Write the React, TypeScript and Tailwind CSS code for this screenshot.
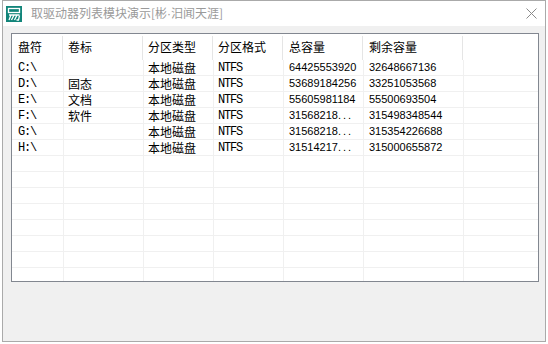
import React from 'react';

type Drive = {
  letter: string;
  label: string;
  kind: string;
  fs: string;
  total: string;
  free: string;
};

const drives: Drive[] = [
  { letter: 'C:\\', label: '', kind: '本地磁盘', fs: 'NTFS', total: '64425553920', free: '32648667136' },
  { letter: 'D:\\', label: '固态', kind: '本地磁盘', fs: 'NTFS', total: '53689184256', free: '33251053568' },
  { letter: 'E:\\', label: '文档', kind: '本地磁盘', fs: 'NTFS', total: '55605981184', free: '55500693504' },
  { letter: 'F:\\', label: '软件', kind: '本地磁盘', fs: 'NTFS', total: '31568218...', free: '315498348544' },
  { letter: 'G:\\', label: '', kind: '本地磁盘', fs: 'NTFS', total: '31568218...', free: '315354226688' },
  { letter: 'H:\\', label: '', kind: '本地磁盘', fs: 'NTFS', total: '31514217...', free: '315000655872' },
];

const headers = ['盘符', '卷标', '分区类型', '分区格式', '总容量', '剩余容量'];
const headerWidths = ['w-[51px] pl-[6px]', 'w-[80px] pl-[5px]', 'w-[70px] pl-[5px]', 'w-[70px] pl-[5px]', 'w-[80px] pl-[6px]', 'w-[100px] pl-[6px]'];

const cjk = "font-['Noto_Sans_CJK_SC',sans-serif]";
const mono = "font-['Liberation_Mono',monospace] text-[12px] tracking-[-1.2px]";
const num = "font-['Liberation_Sans',sans-serif] text-[11px]";

function Num({ value }: { value: string }) {
  if (value.endsWith('...')) {
    return (
      <>
        {value.slice(0, -3)}
        <span className="tracking-[2px]">...</span>
      </>
    );
  }
  return <>{value}</>;
}

function AppIcon() {
  return (
    <svg width="16" height="16" viewBox="0 0 16 16" className="shrink-0">
      <rect x="0" y="0" width="16" height="16" fill="#12857a" />
      <rect x="2.5" y="2.5" width="11" height="4" fill="none" stroke="#fff" strokeWidth="1.3" />
      <path d="M3 9h10.5M5 9 3 14M8 9l-2.5 5M11 9l-2.5 5M13.5 9.5 12.5 14h-2" stroke="#fff" strokeWidth="1.3" fill="none" />
    </svg>
  );
}

export default function App() {
  const blankRows = Array.from({ length: 9 });
  return (
    <div className="h-[344px] w-[548px] overflow-hidden bg-white pl-[2px]">
      <div className="flex h-[342px] w-[544px] flex-col border border-[#aaaaaa]">
        {/* title bar */}
        <div className="flex h-[25px] shrink-0 items-center bg-white pl-[3px] pr-[8px]">
          <AppIcon />
          <span className={`${cjk} ml-[9px] text-[12px] text-[#9a9a9a]`}>
            取驱动器列表模块演示[彬<span className="font-['Liberation_Sans',sans-serif]">·</span>汨闻天涯]
          </span>
          <svg width="11" height="11" viewBox="0 0 11 11" className="ml-auto">
            <path d="M0.5 0.5l10 10M10.5 0.5l-10 10" stroke="#8a8a8a" strokeWidth="1" />
          </svg>
        </div>

        {/* client area */}
        <div className="flex-1 bg-[#f0f0f0] pl-[8px] pt-[7px]">
          <div className="h-[249px] w-[528px] overflow-hidden border border-[#828790] bg-white">
            <div className={`${cjk} mt-[2px] flex h-[24px] text-[12px] text-black`}>
              {headers.map((h, i) => (
                <div key={h} className={`${headerWidths[i]} flex items-center border-r border-[#e5e5e5] pb-[2px]`}>
                  {h}
                </div>
              ))}
            </div>
            {drives.map((d) => (
              <div key={d.letter} className="flex h-[16px] border-b border-[#f0f0f0] text-black">
                <div className={`${mono} flex w-[52px] items-center border-r border-[#f0f0f0] pl-[6px]`}>{d.letter}</div>
                <div className={`${cjk} flex w-[80px] items-center border-r border-[#f0f0f0] pl-[4px] text-[12px]`}>{d.label}</div>
                <div className={`${cjk} flex w-[70px] items-center border-r border-[#f0f0f0] pl-[4px] text-[12px]`}>{d.kind}</div>
                <div className={`${mono} flex w-[70px] items-center border-r border-[#f0f0f0] pl-[4px]`}>{d.fs}</div>
                <div className={`${num} flex w-[80px] items-center border-r border-[#f0f0f0] pl-[5px]`}>
                  <Num value={d.total} />
                </div>
                <div className={`${num} flex w-[100px] items-center border-r border-[#f0f0f0] pl-[5px]`}>{d.free}</div>
              </div>
            ))}
            {blankRows.map((_, i) => (
              <div key={i} className="flex h-[16px] border-b border-[#f0f0f0]">
                <div className="w-[52px] border-r border-[#f0f0f0]" />
                <div className="w-[80px] border-r border-[#f0f0f0]" />
                <div className="w-[70px] border-r border-[#f0f0f0]" />
                <div className="w-[70px] border-r border-[#f0f0f0]" />
                <div className="w-[80px] border-r border-[#f0f0f0]" />
                <div className="w-[100px] border-r border-[#f0f0f0]" />
              </div>
            ))}
          </div>
        </div>
      </div>
    </div>
  );
}
